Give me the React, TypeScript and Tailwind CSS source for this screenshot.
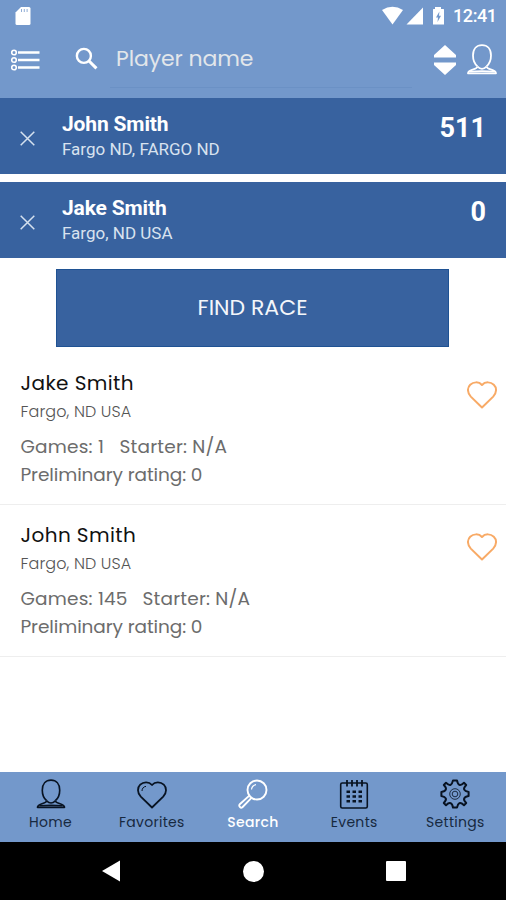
import type { ReactNode } from "react";
import clsx from "clsx";

type Player = {
  name: string;
  location: string;
  games: number;
  gamesClass: string;
};

const selected = [
  { name: "John Smith", location: "Fargo ND, FARGO ND", rating: 511 },
  { name: "Jake Smith", location: "Fargo, ND USA", rating: 0 },
];

const players: Player[] = [
  { name: "Jake Smith", location: "Fargo, ND USA", games: 1, gamesClass: "w-[99px]" },
  { name: "John Smith", location: "Fargo, ND USA", games: 145, gamesClass: "w-[122px]" },
];

function PersonIcon({ className }: { className?: string }) {
  return (
    <svg viewBox="0 0 30 31" className={className} fill="none" stroke="currentColor" strokeLinejoin="round">
      <path d="M10.5 22.4C7.8 20 6 16 6 11.5C6 5 9.6 1.2 15 1.2S24 5 24 11.5C24 16 22.2 20 19.5 22.4" />
      <path d="M10.5 22.4C10.5 26 1.2 24.5 1 29.3H29C28.8 24.5 19.5 26 19.5 22.4" />
      <path d="M10.5 22.6Q12.7 24.8 15 24.8T19.5 22.6M3 27.6Q15 26.8 27 27.6" />
    </svg>
  );
}

function HeartIcon({ className, shine }: { className?: string; shine?: boolean }) {
  return (
    <svg viewBox="0 0 30 28" className={className} fill="none" stroke="currentColor" strokeLinejoin="round">
      <path d="M15 26.5L3.8 15.6C0 11.5.3 6.5 3.2 3.7C6.3.8 11.8.3 15 4C18.2.3 23.7.8 26.8 3.7C29.7 6.5 30 11.5 26.2 15.6Z" />
      {shine && <path d="M5 10C5 7.5 6.5 5.6 9 5.4" strokeWidth="1" />}
    </svg>
  );
}

function SearchIcon() {
  return (
    <svg viewBox="0 0 30 30" className="size-[30px]" fill="none" stroke="currentColor" strokeWidth="1.9">
      <circle cx="19" cy="11" r="9.5" />
      <path d="M13.5 10.5C13.8 8 15.5 6.2 18 5.7" strokeWidth="1.2" />
      <path d="M11.6 16.4L1.8 25.2C.3 26.8 2.6 29.6 4.4 28.2L13.7 18.7" />
    </svg>
  );
}

function CalendarIcon() {
  return (
    <svg viewBox="0 0 30 30" className="size-[30px]" fill="none" stroke="currentColor" strokeWidth="1.6">
      <rect x="1.7" y="4" width="26.6" height="25" rx="1.5" />
      <path d="M8 1V7.5M13 1V7.5M18 1V7.5M23 1V7.5" strokeWidth="1.8" />
      <path d="M7.5 12.8H23M7.5 17.5H23M7.5 22.2H23" strokeWidth="2.6" strokeDasharray="3.5 2.5" />
    </svg>
  );
}

function GearIcon() {
  return (
    <svg viewBox="-15 -15 30 30" className="size-[30px]" fill="none" stroke="currentColor" strokeWidth="2" strokeLinejoin="round">
      <path d="M-2-13.6H2Q2.6-10 4.4-9.2T9-11.2L11.2-9Q8.4-6 9.2-4.4T13.6-2V2Q10 2.6 9.2 4.4T11.2 9L9 11.2Q6 8.4 4.4 9.2T2 13.6H-2Q-2.6 10-4.4 9.2T-9 11.2L-11.2 9Q-8.4 6-9.2 4.4T-13.6 2V-2Q-10-2.6-9.2-4.4T-11.2-9L-9-11.2Q-6-8.4-4.4-9.2T-2-13.6Z" />
      <circle r="5.3" strokeWidth=".8" />
      <circle r="2.8" strokeWidth=".8" />
    </svg>
  );
}

const tabs: { label: string; icon: ReactNode }[] = [
  { label: "Home", icon: <PersonIcon className="h-[30px] w-[30px] stroke-[1.7]" /> },
  { label: "Favorites", icon: <HeartIcon shine className="mt-0.5 h-[28px] w-[30px] stroke-[1.8]" /> },
  { label: "Search", icon: <SearchIcon /> },
  { label: "Events", icon: <CalendarIcon /> },
  { label: "Settings", icon: <GearIcon /> },
];

function StatusBar() {
  return (
    <div className="flex h-[31px] items-center pl-[15px] pr-[10px]">
      <svg viewBox="0 0 16 20" className="h-[20px] w-[16px]">
        <path d="M6 1H14Q15.5 1 15.5 2.5V17.5Q15.5 19 14 19H2Q.5 19 .5 17.5V6.5Z" fill="#fff" />
        <path d="M6.500 3V6M9.300 3V6M12.100 3V6" stroke="#7398cb" strokeWidth="0.8" />
      </svg>
      <svg viewBox="0 0 62 20" className="ml-auto h-[20px] w-[62px]" fill="#fff">
        <path d="M0 4Q10.5-2.5 21 4L10.5 18.5Z" />
        <path d="M41 1.5V18.5H24.5Z" />
        <path d="M53 1H59V3H61.5Q62 3 62 4V18.5H51V4Q51 3 51.5 3H53Z" />
        <path d="M57.4 5.5L54 11.5H56L55.5 16L59 9.8H57Z" fill="#7398cb" />
      </svg>
      <span className="ml-[9px] w-[43px] whitespace-nowrap font-[Roboto] text-[18px] font-medium leading-5 tracking-[-0.4px]">12:41</span>
    </div>
  );
}

function PlayerRow({ player }: { player: Player }) {
  return (
    <li className="flex h-[152px] justify-between border-b border-[#eeeeee] pl-[20.5px] pr-[9px] pt-4 text-[#6c6c6c]">
      <div>
        <h2 className="text-[20px] leading-7 tracking-[0.4px] text-[#111]">{player.name}</h2>
        <p className="pt-px text-[16px] font-light leading-7 tracking-[0.1px] text-[#555]">{player.location}</p>
        <div className="mt-[7px] flex text-[18.5px] leading-[28px] tracking-[0.2px]">
          <span className={clsx("shrink-0 whitespace-pre", player.gamesClass)}>Games: {player.games}</span>
          <span>Starter: N/A</span>
        </div>
        <p className="text-[18.5px] leading-7 tracking-[-0.1px]">Preliminary rating: 0</p>
      </div>
      <HeartIcon className="mt-[12px] h-[28px] w-[30px] stroke-2 text-[#f8aa66]" />
    </li>
  );
}

export default function App() {
  return (
    <div className="flex h-[900px] w-[506px] flex-col overflow-hidden bg-white font-['Poppins','Inter',sans-serif]">
      <header className="h-[98px] shrink-0 bg-[#7398cb] text-white">
        <StatusBar />
        <div className="flex h-[57px] items-center pl-[11px] pr-[9px]">
          <svg viewBox="0 0 29 22" className="h-[22px] w-[29px]" fill="none" stroke="currentColor">
            <path d="M7 3.5H28.5M7 11H28.5M7 18.5H28.5" strokeWidth="2.5" />
            <g strokeWidth="1.6">
              <circle cx="3" cy="3.5" r="2.3" />
              <circle cx="3" cy="11" r="2.3" />
              <circle cx="3" cy="18.5" r="2.3" />
            </g>
          </svg>
          <svg viewBox="0 0 22 22" className="-mt-0.5 ml-[35px] h-[23px] w-[23px]" fill="none" stroke="currentColor" strokeWidth="2.3">
            <circle cx="8.5" cy="8.5" r="6.7" />
            <path d="M13.4 13.4L20.5 20.5" strokeWidth="2.9" />
          </svg>
          <div className="ml-3 flex h-[57px] w-[302px] items-center border-b border-[#6b91c5] pb-0.5 pl-1.5 text-[22px] tracking-[-0.1px] text-[#e2e6ea]">
            Player name
          </div>
          <svg viewBox="0 0 22 30" className="ml-[22px] h-[30px] w-[22px]" fill="currentColor">
            <path d="M11 0L22 10V12.5H0V10ZM0 17.5H22V20L11 30L0 20Z" />
          </svg>
          <PersonIcon className="ml-auto h-[31px] w-[30px] stroke-[1.8]" />
        </div>
      </header>

      {/* Selected players */}
      <div className="flex shrink-0 flex-col gap-2 font-[Roboto]">
        {selected.map((p) => (
          <div key={p.name} className="flex h-[76px] bg-[#38629f] pl-5 pr-5 text-white">
            <svg viewBox="0 0 15 15" className="mt-[33px] size-[15px] text-[#d5e1ef]" stroke="currentColor" strokeWidth="1.5">
              <path d="M.7.7L14.3 14.3M14.3.7L.7 14.3" />
            </svg>
            <div className="ml-[27px] pt-[13px]">
              <h2 className="text-[21px] font-bold leading-[26px] tracking-[-0.15px]">{p.name}</h2>
              <p className="text-[17px] leading-[25px] text-[#d8e2ef]">{p.location}</p>
            </div>
            <span className="ml-auto pt-[13px] text-[27px] font-bold leading-[34px]">{p.rating}</span>
          </div>
        ))}
      </div>

      <button className="ml-[56px] mt-[11px] h-[78px] w-[393px] shrink-0 bg-[#38629f] pb-0.5 text-[22px] text-[#f3f6fa] shadow-[inset_0_0_0_1px_#1f5293]">
        FIND RACE
      </button>

      <ul className="mt-[6px] flex-1">
        {players.map((player) => (
          <PlayerRow key={player.name} player={player} />
        ))}
      </ul>

      <nav className="grid h-[70px] shrink-0 grid-cols-5 bg-[#7398cb]">
        {tabs.map((tab) => (
          <a
            key={tab.label}
            className={clsx(
              "flex flex-col items-center justify-between pb-[10px] pt-[7px] text-[14px] leading-5 tracking-[0.3px]",
              tab.label === "Search" ? "font-medium text-white" : "text-[#172940]"
            )}
          >
            <span className={tab.label === "Search" ? "" : "text-[#081322]"}>{tab.icon}</span>
            {tab.label}
          </a>
        ))}
      </nav>

      {/* Android navigation keys */}
      <div className="flex h-[58px] shrink-0 items-center justify-between bg-black pl-[102px] pr-[100px] text-white">
        <svg viewBox="0 0 18 22" className="h-[22px] w-[18px]" fill="currentColor">
          <path d="M18 .5V21.5L0 11Z" />
        </svg>
        <div className="ml-px size-[21px] rounded-full bg-white" />
        <div className="size-5 rounded-[1px] bg-white" />
      </div>
    </div>
  );
}
